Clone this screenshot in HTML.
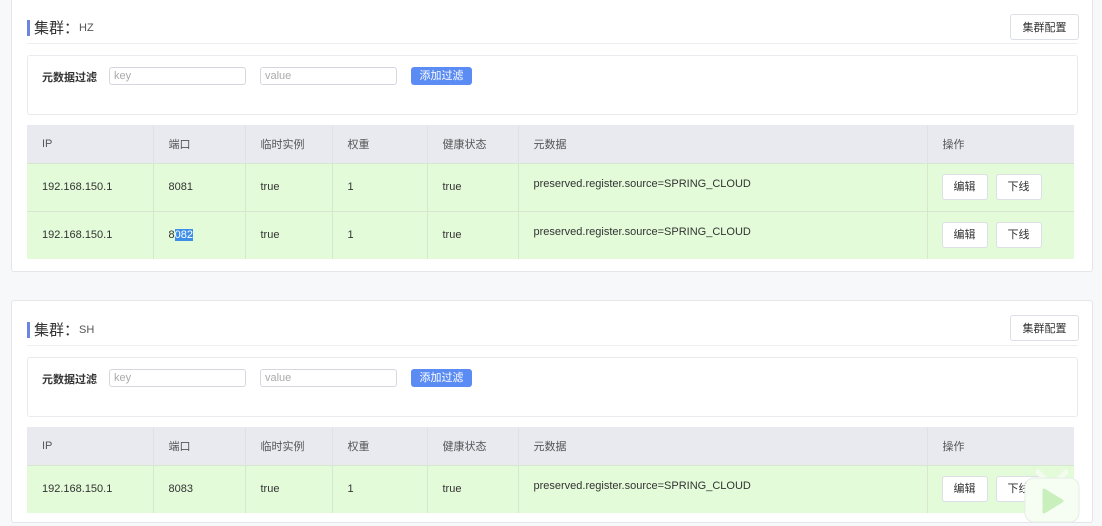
<!DOCTYPE html>
<html><head><meta charset="utf-8"><style>
*{box-sizing:border-box;margin:0;padding:0}
body{width:1102px;height:526px;overflow:hidden;background:#f7f8fa;font-family:"Liberation Sans","Noto Sans CJK SC",sans-serif;color:#333;position:relative}
.panel{position:absolute;left:11px;width:1082px;background:#fff;border:1px solid #e4e6ea;border-radius:3px}
.ab{position:absolute}
.title{left:15px;font-size:15px;color:#333;display:flex;align-items:center}
.title .bar{width:3px;height:16px;background:#6b86e0;margin-right:4px}
.title small{font-size:11px;color:#555;margin-left:0px}
.hline{left:15px;width:1051px;height:1px;background:#eceef2}
.cbtn{left:998px;width:69px;height:26px;border:1px solid #dcdfe6;border-radius:3px;font-size:11px;color:#333;display:flex;align-items:center;justify-content:center;background:#fff}
.filter{left:15px;width:1051px;height:60px;border:1px solid #e8eaee;border-radius:3px}
.flabel{left:14px;top:13px;font-size:11px;font-weight:bold;color:#333}
.inp{top:11px;width:137px;height:18px;border:1px solid #d4d7de;border-radius:3px;font-size:11px;color:#aaa;padding-left:4px;line-height:16px}
.add{left:383px;top:11px;width:61px;height:18px;background:#5b8cf3;border-radius:3px;color:#fff;font-size:11px;text-align:center;line-height:18px}
table{position:absolute;left:15px;border-collapse:collapse;width:1047px;font-size:11px;table-layout:fixed}
th{background:#e9eaf0;font-weight:normal;color:#555;text-align:left;height:38px;padding-left:15px;border-right:1px solid #dfe1e6}
td{background:#e3fbd9;height:48px;padding-left:15px;border-right:1px solid #d6e6cf;border-top:1px solid #d6e6cf;color:#333}
td.meta{vertical-align:top;padding-top:14px}
td.op{padding-left:14px}
th:last-child,td:last-child{border-right:none}
.b{display:inline-block;width:46px;height:26px;border:1px solid #dcdfe6;border-radius:3px;background:#fff;text-align:center;line-height:24px;margin-right:8px;font-size:11px}
.sel{background:#3d8ee8;color:#fff}
</style></head><body>
<div class="panel" style="top:-2px;height:274px">
 <div class="ab title" style="top:18px"><span class="bar"></span>集群：<small>HZ</small></div>
 <div class="ab cbtn" style="top:15px">集群配置</div>
 <div class="ab hline" style="top:44px"></div>
 <div class="ab filter" style="top:56px">
  <div class="ab flabel">元数据过滤</div>
  <div class="ab inp" style="left:81px">key</div>
  <div class="ab inp" style="left:232px">value</div>
  <div class="ab add">添加过滤</div>
 </div>
 <table style="top:126px">
  <colgroup><col style="width:126px"><col style="width:92px"><col style="width:87px"><col style="width:95px"><col style="width:91px"><col style="width:409px"><col></colgroup>
  <tr><th>IP</th><th>端口</th><th>临时实例</th><th>权重</th><th>健康状态</th><th>元数据</th><th>操作</th></tr>
  <tr><td>192.168.150.1</td><td>8081</td><td>true</td><td>1</td><td>true</td><td class="meta">preserved.register.source=SPRING_CLOUD</td><td class="op"><span class="b">编辑</span><span class="b">下线</span></td></tr>
  <tr><td>192.168.150.1</td><td>8<span class="sel">082</span></td><td>true</td><td>1</td><td>true</td><td class="meta">preserved.register.source=SPRING_CLOUD</td><td class="op"><span class="b">编辑</span><span class="b">下线</span></td></tr>
 </table>
</div>
<div class="panel" style="top:300px;height:223px">
 <div class="ab title" style="top:18px"><span class="bar"></span>集群：<small>SH</small></div>
 <div class="ab cbtn" style="top:14px">集群配置</div>
 <div class="ab hline" style="top:44px"></div>
 <div class="ab filter" style="top:56px">
  <div class="ab flabel">元数据过滤</div>
  <div class="ab inp" style="left:81px">key</div>
  <div class="ab inp" style="left:232px">value</div>
  <div class="ab add">添加过滤</div>
 </div>
 <table style="top:126px">
  <colgroup><col style="width:126px"><col style="width:92px"><col style="width:87px"><col style="width:95px"><col style="width:91px"><col style="width:409px"><col></colgroup>
  <tr><th>IP</th><th>端口</th><th>临时实例</th><th>权重</th><th>健康状态</th><th>元数据</th><th>操作</th></tr>
  <tr><td>192.168.150.1</td><td>8083</td><td>true</td><td>1</td><td>true</td><td class="meta">preserved.register.source=SPRING_CLOUD</td><td class="op"><span class="b">编辑</span><span class="b">下线</span></td></tr>
 </table>
</div>
<svg class="ab" style="left:1022px;top:468px" width="60" height="56" viewBox="0 0 60 56">
 <path d="M16 4 L24 12 M44 4 L36 12" stroke="#f4fcf0" stroke-width="5" stroke-linecap="round"/>
 <rect x="3" y="10" width="54" height="44" rx="9" fill="#f6fdf3" stroke="#e6ede4"/>
 <path d="M22 22 L40 33 L22 44 Z" fill="#c8efbc" stroke="#c8efbc" stroke-width="3" stroke-linejoin="round"/>
</svg>
</body></html>
